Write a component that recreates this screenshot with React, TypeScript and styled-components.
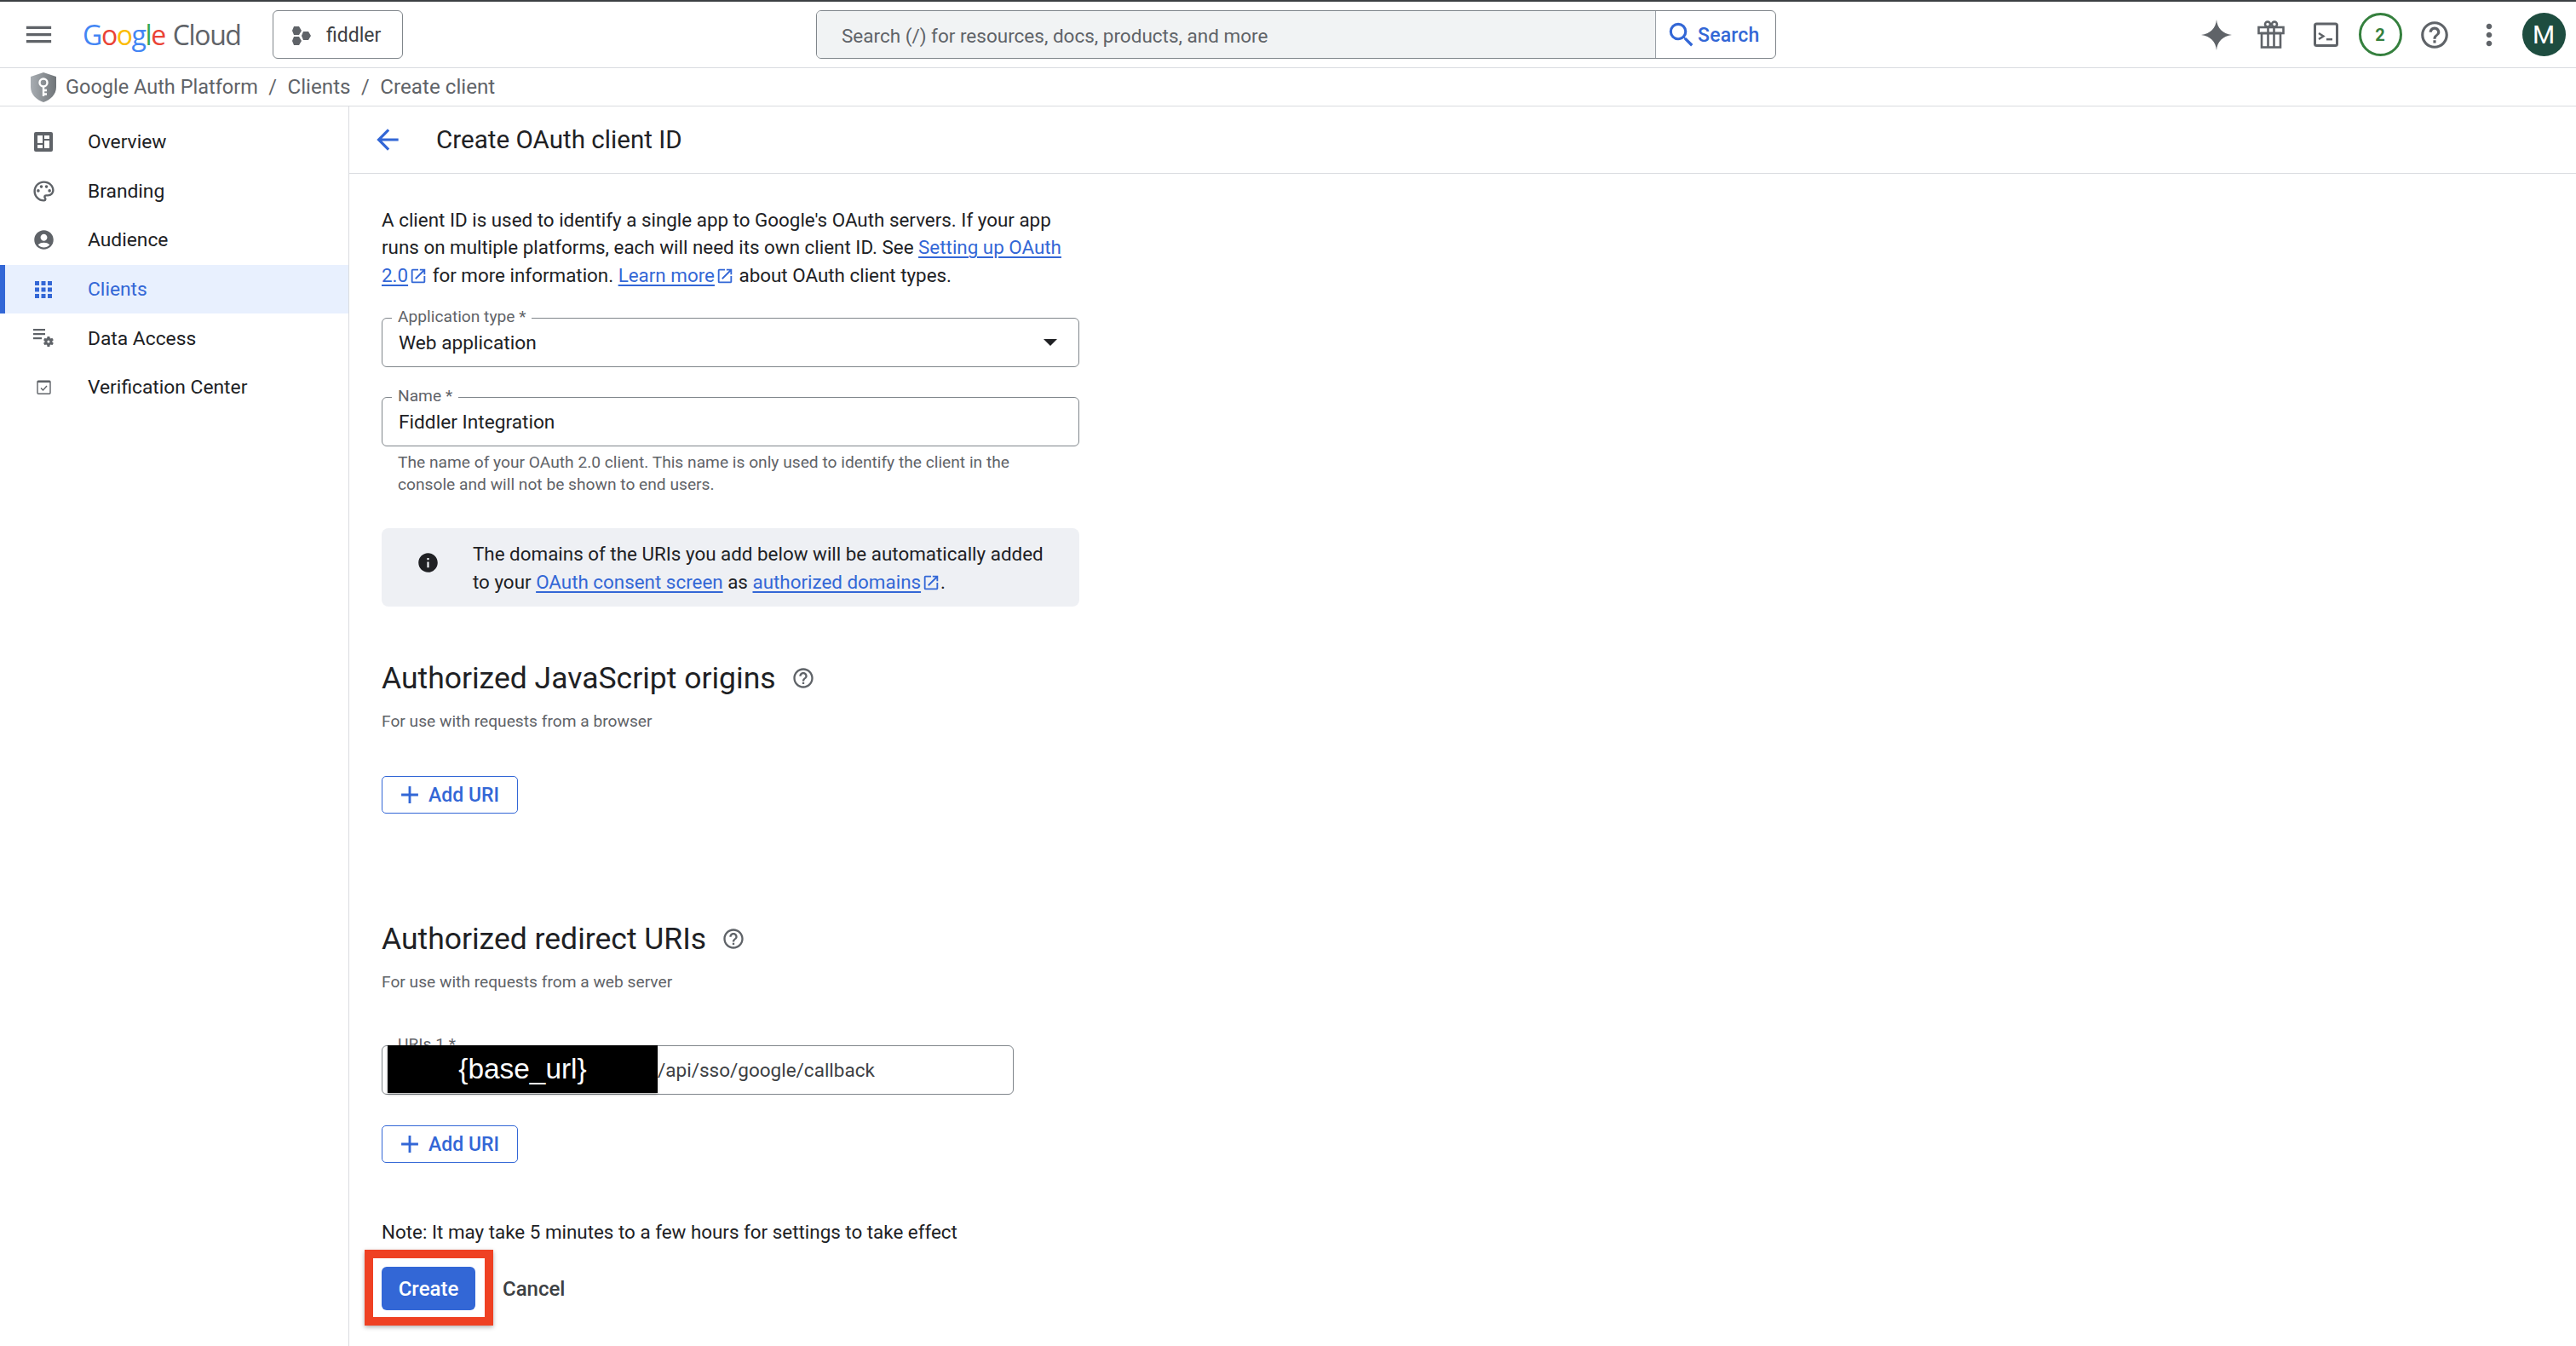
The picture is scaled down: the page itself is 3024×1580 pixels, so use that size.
import React from "react";
import styled, { createGlobalStyle } from "styled-components";
import {
  MdMenu, MdOutlinePalette, MdAccountCircle, MdApps, MdHelpOutline, MdMoreVert, MdSearch,
  MdArrowBack, MdInfo, MdOpenInNew, MdAdd,
} from "react-icons/md";

const Global = createGlobalStyle`
  html, body { margin: 0; padding: 0; background: #fff; }
  body { font-family: Roboto, "Liberation Sans", sans-serif; color: #202124; }
  * { box-sizing: border-box; }
`;

const Page = styled.div`
  width: 3024px; height: 1580px; overflow: hidden; display: flex; flex-direction: column;
  border-top: 2px solid #3c4043;
`;
const Header = styled.header`
  height: 78px; flex: none; display: flex; align-items: center; border-bottom: 1.5px solid #dadce0;
`;
const MenuButton = styled.div`
  margin-left: 26px; width: 39px; height: 39px; color: #5f6368; display: flex;
`;
const Logo = styled.div`
  margin-left: 32px; width: 186px; display: flex; gap: 9px; align-items: baseline;
  font-family: "Open Sans", Roboto, sans-serif; font-size: 32px; letter-spacing: -1.4px; white-space: nowrap;
`;
const LogoLetter = styled.span<{ $c: string }>`color: ${p => p.$c};`;
const LogoWord = styled.span`color: #5f6368;`;
const ProjectButton = styled.div`
  margin-left: 37px; width: 153px; height: 57px; border: 1.5px solid #80868b; border-radius: 6px;
  display: flex; align-items: center; padding: 2px 0 0 22px; gap: 18px; font-size: 23px; color: #3c4043;
`;
const SearchBar = styled.div`
  margin-left: 485px; width: 1127px; height: 57px; border: 1.5px solid #80868b; border-radius: 6px;
  display: flex; overflow: hidden;
`;
const SearchField = styled.div`
  flex: 1; background: #f1f3f4; display: flex; align-items: center; padding: 2px 0 0 29px;
  font-size: 22.5px; color: #5f6368;
`;
const SearchAction = styled.div`
  width: 141px; flex: none; border-left: 1.5px solid #9aa0a6; display: flex; align-items: center;
  padding: 0 0 0 11px; color: #3367d6; font-size: 23px; font-weight: 500; letter-spacing: .2px;
`;
const SearchLabel = styled.span`padding-top: 2px;`;
const HeaderTools = styled.div`
  margin-left: auto; padding-right: 6px; display: flex; align-items: center;
`;
const ToolSlot = styled.div`
  width: 64px; height: 64px; display: flex; align-items: center; justify-content: center; color: #5f6368;
`;
const Badge = styled.div`
  width: 51px; height: 51px; border-radius: 50%; border: 3px solid #35803e; color: #35803e;
  display: flex; align-items: center; justify-content: center; font-size: 20px; font-weight: 700;
`;
const Avatar = styled.div`
  width: 51px; height: 51px; border-radius: 50%; background: #1e4d40; color: #fff;
  display: flex; align-items: center; justify-content: center; font-size: 30px; font-family: Roboto, sans-serif;
`;
const Crumbs = styled.nav`
  height: 45px; flex: none; display: flex; align-items: center; padding-left: 36px;
  border-bottom: 1.5px solid #dadce0; font-size: 23.5px; color: #5f6368;
`;
const CrumbSep = styled.span`margin: 0 12.5px;`;
const CrumbFirst = styled.span`margin-left: 11px;`;
const CrumbLater = styled.span`font-size: 24.2px;`;
const Body = styled.div`flex: 1; display: flex; min-height: 0;`;
const Sidebar = styled.aside`
  width: 410px; flex: none; border-right: 1.5px solid #dadce0; padding-top: 13px;
`;
const NavItem = styled.div<{ $active?: boolean }>`
  height: 57.6px; display: flex; align-items: center; padding-left: 29px; font-size: 22.8px;
  color: ${p => (p.$active ? "#3367d6" : "#202124")};
  background: ${p => (p.$active ? "#e8f0fe" : "transparent")};
  box-shadow: ${p => (p.$active ? "inset 6px 0 0 #3367d6" : "none")};
`;
const NavIcon = styled.span<{ $active?: boolean }>`
  width: 44px; margin-right: 30px; flex: none; display: flex; align-items: center; justify-content: center;
  color: ${p => (p.$active ? "#3367d6" : "#5f6368")};
`;
const Main = styled.main`flex: 1; min-width: 0;`;
const TitleBar = styled.div`
  height: 79px; display: flex; align-items: center; border-bottom: 1.5px solid #dadce0; padding-left: 26px; color: #3367d6;
`;
const Title = styled.h1`
  margin: 0 0 0 38px; font-size: 29.6px; font-weight: 400; color: #202124;
`;
const Content = styled.div`width: 857px; padding: 38px 0 0 38px;`;
const Intro = styled.p`margin: 0; font-size: 22.4px; line-height: 32.4px; color: #202124;`;
const A = styled.a`color: #3367d6; text-decoration: underline; text-underline-offset: 3px; text-decoration-thickness: 1.5px;`;
const Ext = styled(MdOpenInNew)`color: #3367d6; vertical-align: 2px; margin: -6px 0 -6px 1px;`;
const Field = styled.div<{ $top: number; $width?: number }>`
  position: relative; margin-top: ${p => p.$top}px; width: ${p => p.$width ?? 819}px; height: 58px;
  border: 1.5px solid #80868b; border-radius: 6px; display: flex; align-items: center;
  padding-left: 19px; font-size: 22.7px; color: #202124;
`;
const FieldLabel = styled.label`
  position: absolute; left: 11px; top: -13px; padding: 0 7px; background: #fff; font-size: 19.2px; line-height: 22px; color: #5f6368;
`;
const Caret = styled.span`
  margin-left: auto; margin-right: 25px; width: 0; height: 0;
  border-left: 8px solid transparent; border-right: 8px solid transparent; border-top: 8px solid #202124;
`;
const Hint = styled.p`
  margin: 6px 0 0; padding: 0 19px; width: 819px; font-size: 19.2px; line-height: 26px; color: #5f6368;
`;
const InfoBox = styled.div`
  margin-top: 38px; width: 819px; height: 92px; background: #eef0f4; border-radius: 8px;
  display: flex; padding: 14px 24px 0 41px; font-size: 22.4px; line-height: 32.4px;
`;
const InfoIcon = styled(MdInfo)`flex: none; margin: 13px 39px 0 0; color: #202124;`;
const SectionTitle = styled.h2<{ $top: number }>`
  margin: ${p => p.$top}px 0 0; display: flex; align-items: center; gap: 18px;
  font-size: 35.5px; line-height: 44px; font-weight: 400; color: #202124;
`;
const SectionSub = styled.p`margin: 16px 0 0; font-size: 19.2px; line-height: 26px; color: #5f6368;`;
const AddButton = styled.button<{ $top: number }>`
  margin-top: ${p => p.$top}px; width: 160px; height: 44px; padding: 0 0 0 15px; background: #fff;
  border: 1.5px solid #3367d6; border-radius: 5px; color: #3367d6; font: 500 23px Roboto, sans-serif;
  display: flex; align-items: center; gap: 5px;
`;
const RedactedValue = styled.span`
  position: absolute; left: 6px; top: -1px; width: 317px; height: 56px; background: #000; color: #fff;
  display: flex; align-items: center; justify-content: center; font: 33.4px "Liberation Sans", Arial, sans-serif;
  box-shadow: 0 2px 3px rgba(0,0,0,.25);
`;
const UriText = styled.span`margin-left: 304px; color: #3c4043; font-size: 22.5px;`;
const Note = styled.p`margin: 65px 0 0; font-size: 22.4px; line-height: 32px; color: #202124;`;
const Actions = styled.div`margin-top: 25px; display: flex; align-items: center; position: relative;`;
const PrimaryButton = styled.button`
  width: 110px; height: 51px; border: 0; border-radius: 6px; background: #3367d6; color: #fff;
  font: 500 24px Roboto, sans-serif; padding: 0;
`;
const GhostButton = styled.button`
  margin-left: 32px; border: 0; background: none; padding: 0; font: 500 24px Roboto, sans-serif; color: #3c4043;
`;
const Highlight = styled.div`
  position: absolute; left: -20px; top: -20px; width: 151px; height: 89px;
  border: 10px solid #ef4123; box-shadow: 0 2px 5px rgba(0,0,0,.3); pointer-events: none;
`;

const Spark = () => (
  <svg width="36" height="36" viewBox="0 0 24 24" fill="#5f6368">
    <path d="M12 0c.7 6.8 4.6 11 12 12-7.4 1-11.3 5.200-12 12-.7-6.800-4.600-11-12-12C7.400 11 11.300 6.800 12 0Z" />
  </svg>
);
const Gift = () => (
  <svg width="32" height="33" viewBox="0 0 32 33" fill="none" stroke="#5f6368" strokeWidth="2.6">
    <circle cx="12" cy="4.5" r="3" />
    <circle cx="20" cy="4.5" r="3" />
    <rect x="1.500" y="8" width="29" height="7" />
    <rect x="5" y="15" width="22" height="16.500" />
    <path d="M12.500 8v23.500M19.500 8v23.500" />
  </svg>
);
const Terminal = () => (
  <svg width="29" height="29" viewBox="0 0 29 29">
    <rect x="1.500" y="2" width="26" height="25.500" rx="2" fill="none" stroke="#5f6368" strokeWidth="3" />
    <path d="M6 13l5.500 3.500L6 20" fill="none" stroke="#5f6368" strokeWidth="2.400" />
    <rect x="15" y="19" width="7" height="2.400" fill="#5f6368" />
  </svg>
);
const Hexes = () => (
  <svg width="22" height="24" viewBox="0 0 22 24" fill="#5f6368">
    <polygon points="2,1 8,1 11,6 8,11 2,11 0,6" />
    <polygon points="2,13 8,13 11,18 8,23 2,23 0,18" />
    <polygon points="13,7 19,7 22,12 19,17 13,17 11,12" />
  </svg>
);
const Shield = () => (
  <svg width="30" height="35" viewBox="0 0 30 35">
    <defs>
      <linearGradient id="sg" x1="0" y1="0" x2="1" y2="0">
        <stop offset="0" stopColor="#a8adb2" />
        <stop offset="1" stopColor="#6f7478" />
      </linearGradient>
    </defs>
    <path d="M15 0l15 5v12c0 9-6.500 15-15 18C6.500 32 0 26 0 17V5Z" fill="url(#sg)" />
    <circle cx="15" cy="12" r="4.500" fill="none" stroke="#fff" strokeWidth="2.400" />
    <path d="M15 16v12M15 21h4M15 25.500h4" stroke="#fff" strokeWidth="2.400" fill="none" />
  </svg>
);
const OverviewIcon = () => (
  <svg width="22" height="23" viewBox="0 0 22 23">
    <rect width="22" height="23" rx="2" fill="#5f6368" />
    <path d="M4 4h6v9H4zM12 4h6v4h-6zM4 15h6v4H4zM12 10h6v9h-6z" fill="#fff" />
  </svg>
);
const DataAccessIcon = () => (
  <svg width="25" height="22" viewBox="0 0 25 22" fill="#5f6368">
    <rect x="0" y="0" width="14" height="2.200" />
    <rect x="0" y="5" width="14" height="2.200" />
    <rect x="0" y="10" width="10" height="2.200" />
    <g transform="translate(10.500 7.500) scale(.62)">
      <path d="M19.140 12.940c.04-.3.060-.61.060-.94 0-.32-.020-.64-.070-.94l2.030-1.580a.49.490 0 0 0 .12-.61l-1.920-3.320a.49.490 0 0 0-.59-.22l-2.390.96c-.5-.38-1.030-.7-1.620-.94l-.36-2.540a.48.480 0 0 0-.48-.41h-3.840a.48.480 0 0 0-.47.410l-.36 2.540c-.59.240-1.130.57-1.620.94l-2.390-.96a.48.480 0 0 0-.59.220L2.740 8.870a.48.480 0 0 0 .12.610l2.030 1.580c-.05.3-.09.630-.09.940s.020.640.070.94l-2.030 1.580a.49.490 0 0 0-.12.610l1.920 3.320c.12.220.37.290.59.220l2.390-.96c.5.380 1.030.7 1.620.94l.36 2.540c.05.240.24.41.48.41h3.840c.24 0 .44-.17.47-.41l.36-2.540c.59-.24 1.130-.56 1.620-.94l2.390.96c.22.080.47 0 .59-.22l1.920-3.320c.12-.22.070-.47-.12-.61l-2.010-1.580zM12 14.500A2.500 2.500 0 1 1 12 9.500a2.500 2.500 0 0 1 0 5z" />
    </g>
  </svg>
);
const VerifyIcon = () => (
  <svg width="17" height="17" viewBox="0 0 17 17" fill="none" stroke="#5f6368">
    <rect x="1" y="1.200" width="15" height="15" rx="1" strokeWidth="1.400" />
    <path d="M1 2h15" strokeWidth="2.200" />
    <path d="M5 9.500l2.500 2.500 4.500-5" strokeWidth="1.400" />
  </svg>
);

const navItems: { label: string; icon: React.ReactNode; active?: boolean }[] = [
  { label: "Overview", icon: <OverviewIcon /> },
  { label: "Branding", icon: <MdOutlinePalette size={29} /> },
  { label: "Audience", icon: <MdAccountCircle size={27} /> },
  { label: "Clients", icon: <MdApps size={30} />, active: true },
  { label: "Data Access", icon: <DataAccessIcon /> },
  { label: "Verification Center", icon: <VerifyIcon /> },
];

export default function App() {
  return (
    <Page>
      <Global />
      <Header>
        <MenuButton><MdMenu size={39} /></MenuButton>
        <Logo>
          <span>
            <LogoLetter $c="#4285f4">G</LogoLetter>
            <LogoLetter $c="#ea4335">o</LogoLetter>
            <LogoLetter $c="#fbbc04">o</LogoLetter>
            <LogoLetter $c="#4285f4">g</LogoLetter>
            <LogoLetter $c="#34a853">l</LogoLetter>
            <LogoLetter $c="#ea4335">e</LogoLetter>
          </span>
          <LogoWord>Cloud</LogoWord>
        </Logo>
        <ProjectButton><Hexes />fiddler</ProjectButton>
        <SearchBar>
          <SearchField>Search (/) for resources, docs, products, and more</SearchField>
          <SearchAction><MdSearch size={38} /><SearchLabel>Search</SearchLabel></SearchAction>
        </SearchBar>
        <HeaderTools>
          <ToolSlot><Spark /></ToolSlot>
          <ToolSlot><Gift /></ToolSlot>
          <ToolSlot><Terminal /></ToolSlot>
          <ToolSlot><Badge>2</Badge></ToolSlot>
          <ToolSlot><MdHelpOutline size={38} /></ToolSlot>
          <ToolSlot><MdMoreVert size={40} /></ToolSlot>
          <ToolSlot><Avatar>M</Avatar></ToolSlot>
        </HeaderTools>
      </Header>
      <Crumbs>
        <Shield />
        <CrumbFirst>Google Auth Platform</CrumbFirst>
        <CrumbSep>/</CrumbSep>
        <CrumbLater>Clients</CrumbLater>
        <CrumbSep>/</CrumbSep>
        <CrumbLater>Create client</CrumbLater>
      </Crumbs>
      <Body>
        <Sidebar>
          {navItems.map(item => (
            <NavItem key={item.label} $active={item.active}>
              <NavIcon $active={item.active}>{item.icon}</NavIcon>
              {item.label}
            </NavItem>
          ))}
        </Sidebar>
        <Main>
          <TitleBar>
            <MdArrowBack size={38} />
            <Title>Create OAuth client ID</Title>
          </TitleBar>
          <Content>
            <Intro>
              A client ID is used to identify a single app to Google's OAuth servers. If your app runs on multiple
              platforms, each will need its own client ID. See <A>Setting up OAuth 2.0</A>
              <Ext size={22} /> for more information. <A>Learn more</A><Ext size={22} /> about OAuth client types.
            </Intro>
            <Field $top={34}>
              <FieldLabel>Application type *</FieldLabel>
              Web application
              <Caret />
            </Field>
            <Field $top={35}>
              <FieldLabel>Name *</FieldLabel>
              Fiddler Integration
            </Field>
            <Hint>
              The name of your OAuth 2.0 client. This name is only used to identify the client in the console and will
              not be shown to end users.
            </Hint>
            <InfoBox>
              <InfoIcon size={27} />
              <span>
                The domains of the URIs you add below will be automatically added to your <A>OAuth consent screen</A> as{" "}
                <A>authorized domains</A><Ext size={22} />.
              </span>
            </InfoBox>
            <SectionTitle $top={62}>
              Authorized JavaScript origins
              <MdHelpOutline size={28} color="#5f6368" />
            </SectionTitle>
            <SectionSub>For use with requests from a browser</SectionSub>
            <AddButton $top={51}><MdAdd size={34} />Add URI</AddButton>
            <SectionTitle $top={125}>
              Authorized redirect URIs
              <MdHelpOutline size={28} color="#5f6368" />
            </SectionTitle>
            <SectionSub>For use with requests from a web server</SectionSub>
            <Field $top={61} $width={742}>
              <FieldLabel>URIs 1 *</FieldLabel>
              <RedactedValue>{"{base_url}"}</RedactedValue>
              <UriText>/api/sso/google/callback</UriText>
            </Field>
            <AddButton $top={36}><MdAdd size={34} />Add URI</AddButton>
            <Note>Note: It may take 5 minutes to a few hours for settings to take effect</Note>
            <Actions>
              <PrimaryButton>Create</PrimaryButton>
              <GhostButton>Cancel</GhostButton>
              <Highlight />
            </Actions>
          </Content>
        </Main>
      </Body>
    </Page>
  );
}
